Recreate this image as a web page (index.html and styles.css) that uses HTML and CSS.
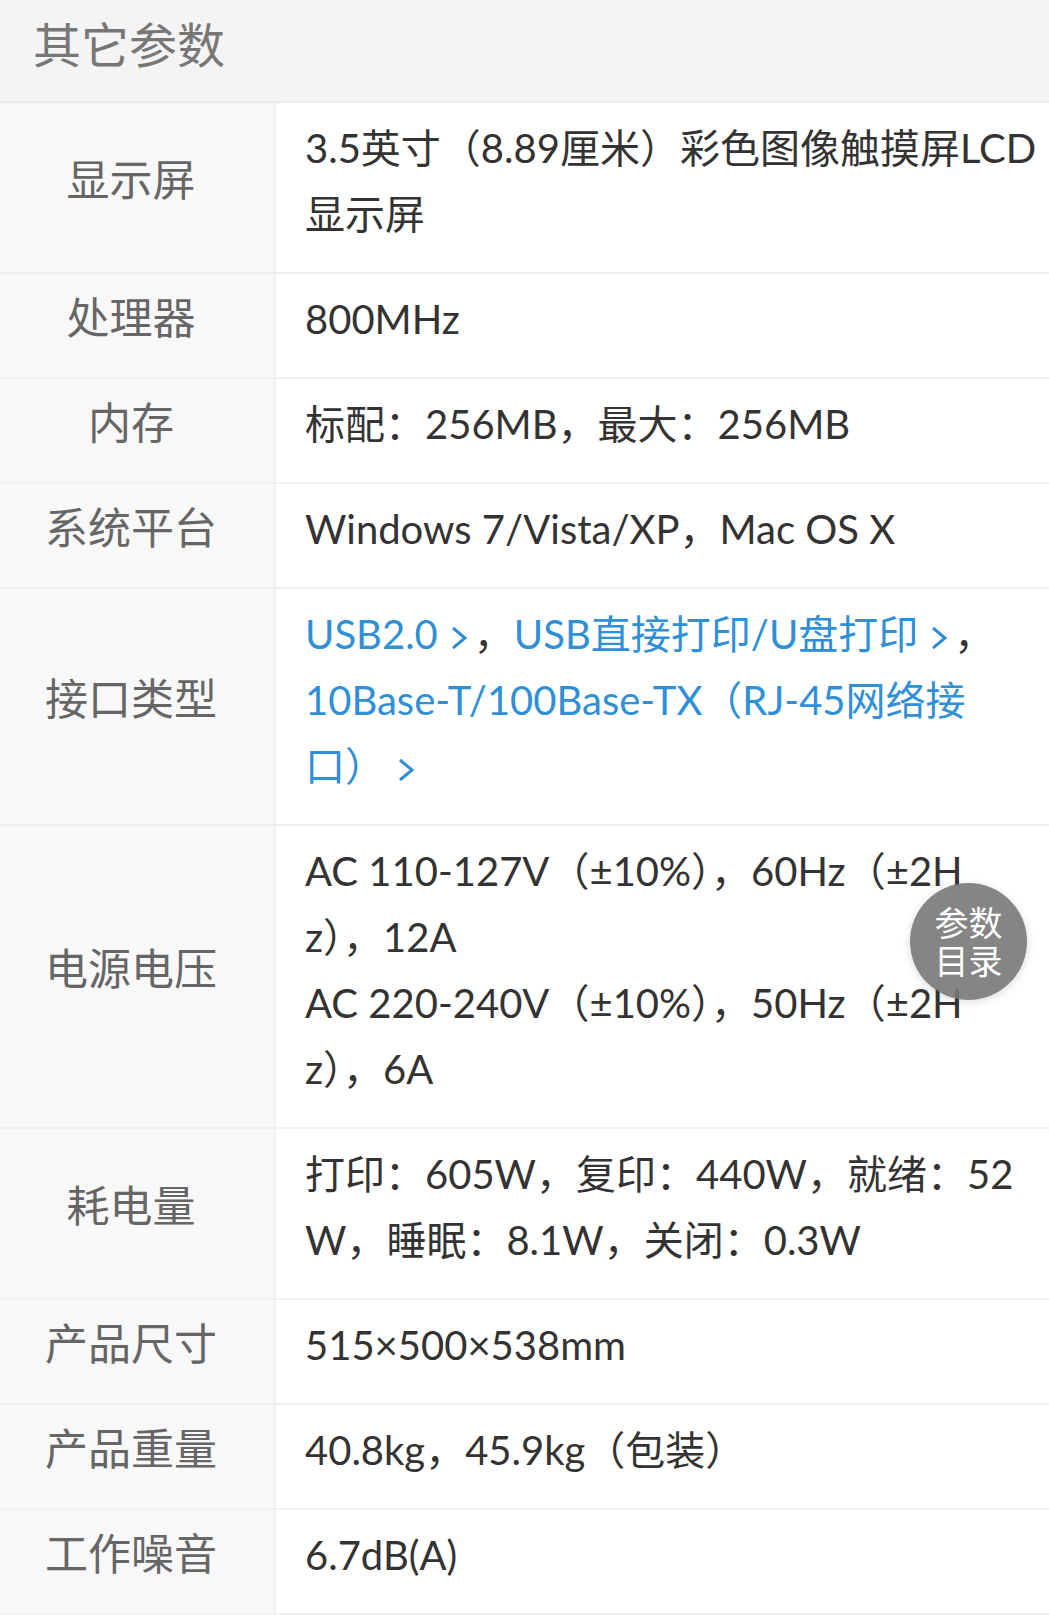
FILE: index.html
```html
<!DOCTYPE html>
<html lang="zh-CN">
<head>
  <meta charset="UTF-8" />
  <meta name="viewport" content="width=device-width, initial-scale=1.0" />
  <title>其它参数</title>
  <link rel="stylesheet" href="styles.css">
</head>
<body>
  <div class="params">
    <div class="params-title">其它参数</div>
    <dl class="param-list">
      <div class="param-row">
        <dt class="param-name">显示屏</dt>
        <dd class="param-value">3.5英寸（8.89厘米）彩色图像触摸屏LCD<br>显示屏</dd>
      </div>
      <div class="param-row">
        <dt class="param-name">处理器</dt>
        <dd class="param-value">800MHz</dd>
      </div>
      <div class="param-row">
        <dt class="param-name">内存</dt>
        <dd class="param-value">标配：256MB，最大：256MB</dd>
      </div>
      <div class="param-row">
        <dt class="param-name">系统平台</dt>
        <dd class="param-value">Windows 7/Vista/XP，Mac OS X</dd>
      </div>
      <div class="param-row">
        <dt class="param-name">接口类型</dt>
        <dd class="param-value">
          <a class="link" href="#">USB2.0<svg class="chevron" viewBox="0 0 18 24"><path d="M3 2 L15 12 L3 22" /></svg></a>，<a class="link" href="#">USB直接打印/U盘打印<svg class="chevron" viewBox="0 0 18 24"><path d="M3 2 L15 12 L3 22" /></svg></a>，<br>
          <a class="link" href="#">10Base-T/100Base-TX（RJ-45网络接<br>口）<svg class="chevron" viewBox="0 0 18 24"><path d="M3 2 L15 12 L3 22" /></svg></a>
        </dd>
      </div>
      <div class="param-row">
        <dt class="param-name">电源电压</dt>
        <dd class="param-value">AC 110-127V（±10%），60Hz（±2H<br>z），12A<br>AC 220-240V（±10%），50Hz（±2H<br>z），6A</dd>
      </div>
      <div class="param-row">
        <dt class="param-name">耗电量</dt>
        <dd class="param-value">打印：605W，复印：440W，就绪：52<br>W，睡眠：8.1W，关闭：0.3W</dd>
      </div>
      <div class="param-row">
        <dt class="param-name">产品尺寸</dt>
        <dd class="param-value">515×500×538mm</dd>
      </div>
      <div class="param-row">
        <dt class="param-name">产品重量</dt>
        <dd class="param-value">40.8kg，45.9kg（包装）</dd>
      </div>
      <div class="param-row">
        <dt class="param-name">工作噪音</dt>
        <dd class="param-value">6.7dB(A)</dd>
      </div>
    </dl>
  </div>

  <a class="catalog-btn" href="#">参数<br>目录</a>
</body>
</html>
```

FILE: styles.css
```css
* {
  margin: 0;
  padding: 0;
  box-sizing: border-box;
  font-family: Lato, 'Noto Sans CJK SC', sans-serif;
}

body {
  background: #fff;
  color: #333;
  width: 1049px;
  overflow: hidden;
}

.params-title {
  background: #f4f4f4;
  color: #777;
  font-size: 48px;
  height: 103px;
  line-height: 90px;
  padding-left: 33px;
  border-bottom: 2px solid #ececec;
}

.param-row {
  display: flex;
  border-bottom: 2px solid #efefef;
}

.param-name {
  width: 276px;
  flex-shrink: 0;
  background: #f8f8f8;
  border-right: 2px solid #f0f0f0;
  color: #666;
  font-size: 43px;
  display: flex;
  align-items: center;
  justify-content: center;
  padding: 0 12px 22px 0;
}

.param-value {
  flex: 1;
  font-size: 40px;
  line-height: 66px;
  padding: 12px 10px 25px 29px;
  color: #333;
}

.link {
  color: #2f8fd7;
  text-decoration: none;
}

.chevron {
  width: 18px;
  height: 24px;
  margin: 0 6px 0 12px;
  vertical-align: -1px;
}

.chevron path {
  fill: none;
  stroke: #2f8fd7;
  stroke-width: 3;
}

.catalog-btn {
  position: absolute;
  left: 910px;
  top: 883px;
  width: 117px;
  height: 117px;
  border-radius: 50%;
  background: rgba(120, 120, 120, 0.9);
  box-shadow: 0 2px 8px rgba(0, 0, 0, 0.15);
  color: #fff;
  font-size: 34px;
  line-height: 38px;
  text-align: center;
  text-decoration: none;
  display: flex;
  align-items: center;
  justify-content: center;
}
```
